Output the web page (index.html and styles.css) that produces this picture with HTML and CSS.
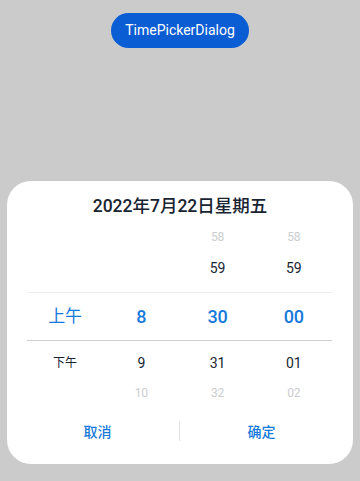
FILE: index.html
```html
<!DOCTYPE html>
<html lang="zh">
<head>
<meta charset="utf-8">
<link rel="stylesheet" href="styles.css">
</head>
<body>
<div class="page">
  <button class="open-btn">TimePickerDialog</button>
</div>
<div class="dialog">
  <div class="title">2022年7月22日星期五</div>
  <div class="picker">
    <div class="row row-far-top">
      <span></span><span></span><span>58</span><span>58</span>
    </div>
    <div class="row row-near-top">
      <span></span><span></span><span>59</span><span>59</span>
    </div>
    <div class="row row-selected">
      <span class="ampm">上午</span><span>8</span><span>30</span><span>00</span>
    </div>
    <div class="row row-near-bottom">
      <span class="ampm">下午</span><span>9</span><span>31</span><span>01</span>
    </div>
    <div class="row row-far-bottom">
      <span></span><span>10</span><span>32</span><span>02</span>
    </div>
  </div>
  <div class="actions">
    <button class="action">取消</button>
    <div class="divider"></div>
    <button class="action">确定</button>
  </div>
</div>
</body>
</html>
```
FILE: styles.css
```css
* { box-sizing: border-box; }
html, body {
  margin: 0;
  padding: 0;
  width: 360px;
  height: 481px;
  background: #cbcbcb;
  font-family: Roboto, "Noto Sans CJK SC", sans-serif;
  overflow: hidden;
}
.page {
  display: flex;
  justify-content: center;
  padding-top: 13px;
}
.open-btn {
  height: 35px;
  padding: 0 14px;
  border: none;
  border-radius: 18px;
  background: #0a5dd3;
  color: #ffffff;
  font-family: Roboto, sans-serif;
  font-size: 14px;
  line-height: 35px;
}
.dialog {
  position: absolute;
  left: 7px;
  top: 181px;
  width: 346px;
  height: 283px;
  background: #ffffff;
  border-radius: 24px;
  display: flex;
  flex-direction: column;
}
.title {
  margin-top: 13px;
  height: 24px;
  line-height: 24px;
  text-align: center;
  font-size: 17.5px;
  font-weight: 500;
  color: #182431;
}
.picker {
  margin: 6px 21px 0 20px;
  display: flex;
  flex-direction: column;
}
.row {
  display: grid;
  grid-template-columns: repeat(4, 1fr);
  text-align: center;
  color: #182431;
}
.row-far-top, .row-far-bottom {
  height: 26px;
  line-height: 26px;
  font-size: 12px;
  color: #cbcdcf;
}
.row-near-top {
  height: 42px;
  line-height: 36px;
  font-size: 14px;
}
.row-selected {
  height: 49px;
  line-height: 47px;
  border-top: 1px solid #eeeeee;
  border-bottom: 1px solid #cfcfcf;
  font-size: 18px;
  font-weight: 500;
  color: #1679dc;
}
.row-selected .ampm {
  font-size: 17px;
  font-weight: 400;
}
.row-near-bottom {
  height: 39px;
  padding-top: 4px;
  line-height: 36px;
  font-size: 14px;
}
.row-near-bottom .ampm {
  font-size: 12px;
}
.actions {
  margin-top: 5px;
  padding: 0 10px 0 9px;
  height: 40px;
  display: flex;
  align-items: center;
}
.action {
  flex: 1;
  height: 40px;
  border: none;
  background: transparent;
  color: #1679dc;
  font-family: "Noto Sans CJK SC", sans-serif;
  font-size: 14px;
  font-weight: 500;
}
.divider {
  width: 1px;
  height: 20px;
  background: #e3e3e3;
}
```
